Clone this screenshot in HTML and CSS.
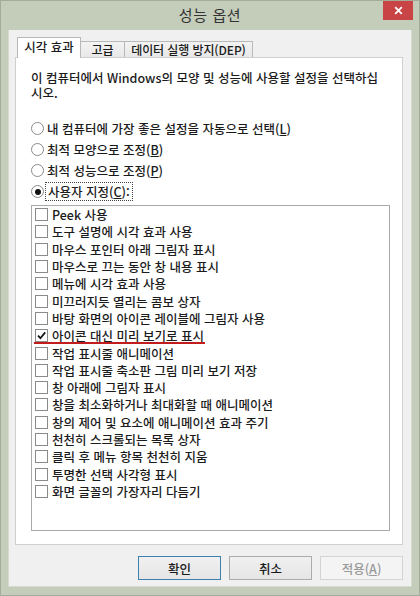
FILE: index.html
```html
<!DOCTYPE html>
<html lang="ko">
<head>
<meta charset="utf-8">
<title>성능 옵션</title>
<link rel="stylesheet" href="styles.css">
</head>
<body>
<div class="window">
  <div class="titlebar">
    <span class="spacer"></span>
    <span class="title">성능 옵션</span>
    <button class="close" aria-label="닫기">
      <svg width="9" height="9" viewBox="0 0 9 9"><path d="M1.2 1.2L7.8 7.8M7.8 1.2L1.2 7.8" stroke="#fff" stroke-width="1.8" fill="none"/></svg>
    </button>
  </div>
  <div class="client">
    <div class="tabs">
      <div class="tab active">시각 효과</div>
      <div class="tab t2">고급</div>
      <div class="tab t3">데이터 실행 방지(DEP)</div>
    </div>
    <div class="panel">
      <p class="desc">이 컴퓨터에서 Windows의 모양 및 성능에 사용할 설정을 선택하십<br>시오.</p>
      <div class="radios">
        <div class="radio"><span class="rb"></span><span class="rl">내 컴퓨터에 가장 좋은 설정을 자동으로 선택(<u>L</u>)</span></div>
        <div class="radio"><span class="rb"></span><span class="rl">최적 모양으로 조정(<u>B</u>)</span></div>
        <div class="radio"><span class="rb"></span><span class="rl">최적 성능으로 조정(<u>P</u>)</span></div>
        <div class="radio"><span class="rb on"></span><span class="rl focus">사용자 지정(<u>C</u>):</span></div>
      </div>
      <div class="listbox">
        <div class="item"><span class="cb"></span>Peek 사용</div>
        <div class="item"><span class="cb"></span>도구 설명에 시각 효과 사용</div>
        <div class="item"><span class="cb"></span>마우스 포인터 아래 그림자 표시</div>
        <div class="item"><span class="cb"></span>마우스로 끄는 동안 창 내용 표시</div>
        <div class="item"><span class="cb"></span>메뉴에 시각 효과 사용</div>
        <div class="item"><span class="cb"></span>미끄러지듯 열리는 콤보 상자</div>
        <div class="item"><span class="cb"></span>바탕 화면의 아이콘 레이블에 그림자 사용</div>
        <div class="item marked"><span class="cb"><svg width="11" height="11" viewBox="0 0 11 11"><path d="M2 5.6L4.4 8.2L9.2 2.4" stroke="#111" stroke-width="1.7" fill="none"/></svg></span>아이콘 대신 미리 보기로 표시</div>
        <div class="item"><span class="cb"></span>작업 표시줄 애니메이션</div>
        <div class="item"><span class="cb"></span>작업 표시줄 축소판 그림 미리 보기 저장</div>
        <div class="item"><span class="cb"></span>창 아래에 그림자 표시</div>
        <div class="item"><span class="cb"></span>창을 최소화하거나 최대화할 때 애니메이션</div>
        <div class="item"><span class="cb"></span>창의 제어 및 요소에 애니메이션 효과 주기</div>
        <div class="item"><span class="cb"></span>천천히 스크롤되는 목록 상자</div>
        <div class="item"><span class="cb"></span>클릭 후 메뉴 항목 천천히 지움</div>
        <div class="item"><span class="cb"></span>투명한 선택 사각형 표시</div>
        <div class="item"><span class="cb"></span>화면 글꼴의 가장자리 다듬기</div>
      </div>
    </div>
    <div class="buttons">
      <button class="btn default">확인</button>
      <button class="btn">취소</button>
      <button class="btn disabled">적용(<u>A</u>)</button>
    </div>
  </div>
</div>
</body>
</html>
```

FILE: styles.css
```css
* { box-sizing: border-box; }
html, body { margin: 0; padding: 0; background: #c4ccba; }
body {
  font-family: "Noto Sans CJK KR", "Malgun Gothic", sans-serif;
  font-size: 12.5px;
  font-weight: 500;
  color: #1b1b1b;
}
.window {
  width: 420px;
  height: 596px;
  background: #c4ccba;
  border: 1px solid #a3ab99;
  display: flex;
  flex-direction: column;
}
.titlebar {
  height: 29px;
  display: grid;
  grid-template-columns: 1fr auto 1fr;
  align-items: start;
}
.title {
  font-size: 15px;
  font-weight: 400;
  line-height: 28px;
  color: #333;
  letter-spacing: 0.6px;
}
.close {
  justify-self: end;
  width: 30px;
  height: 19px;
  margin: 0 6px 0 0;
  padding: 0;
  border: none;
  background: #c94545;
  display: flex;
  align-items: center;
  justify-content: center;
}
.client {
  flex: 1;
  margin: 0 7px 8px 7px;
  background: #f0f0f0;
  border: 1px solid #d6dbd0;
  border-top: none;
  padding: 7px 8px 6px 6px;
  display: flex;
  flex-direction: column;
}
.tabs {
  height: 20px;
  display: flex;
  align-items: flex-end;
  padding-left: 2px;
}
.tab {
  height: 16px;
  border: 1px solid #b9b9b9;
  border-bottom: none;
  background: linear-gradient(#f3f3f3, #e8e8e8);
  display: flex;
  align-items: center;
  justify-content: center;
  line-height: 14px;
  white-space: nowrap;
  font-size: 12px;
}
.tab.active {
  height: 21px;
  width: 64px;
  margin-bottom: -1px;
  background: #fff;
  position: relative;
  z-index: 1;
  padding-bottom: 2px;
  font-size: 12.5px;
}
.tab.t2 { width: 45px; margin-left: -1px; }
.tab.t3 { width: 129px; margin-left: -1px; letter-spacing: -0.1px; }
.panel {
  flex: 1;
  background: #fff;
  border: 1px solid #cfcfcf;
  padding: 12px 12px 13px 15px;
  display: flex;
  flex-direction: column;
}
.desc {
  margin: 0;
  line-height: 15px;
}
.radios { margin-top: 18px; }
.radio {
  height: 21px;
  display: flex;
  align-items: center;
}
.rb {
  width: 13px;
  height: 13px;
  border: 1px solid #8a8a8a;
  border-radius: 50%;
  background: #fff;
  margin-right: 3px;
  display: flex;
  align-items: center;
  justify-content: center;
  flex: none;
}
.rb.on::after {
  content: "";
  width: 6px;
  height: 6px;
  border-radius: 50%;
  background: #111;
}
.rl { line-height: 15px; }
.rl.focus {
  outline: 1px dotted #444;
  outline-offset: 1px;
  padding: 0 1px;
}
.listbox {
  flex: 1;
  margin-top: 3px;
  border: 1px solid #a9a9a9;
  background: #fff;
  padding: 0 0 0 3px;
}
.item {
  height: 17.3px;
  display: flex;
  align-items: center;
  white-space: nowrap;
}
.cb {
  width: 13px;
  height: 13px;
  border: 1px solid #8a8a8a;
  background: #fff;
  margin-right: 4px;
  flex: none;
  display: flex;
  align-items: center;
  justify-content: center;
}
.item.marked { position: relative; }
.item.marked::after {
  content: "";
  position: absolute;
  left: -1px;
  top: 15px;
  width: 171px;
  height: 2px;
  background: #c21c1c;
}
.buttons {
  margin-top: 11px;
  height: 24px;
  display: flex;
  justify-content: flex-end;
  gap: 8px;
}
.btn {
  width: 83px;
  height: 24px;
  font-family: inherit;
  font-size: 12.5px;
  font-weight: 500;
  color: #1b1b1b;
  border: 1px solid #acacac;
  background: linear-gradient(#f0f0f0, #e5e5e5);
  padding: 0;
}
.btn.default { border-color: #3c7fb1; }
.btn.disabled {
  color: #9a9a9a;
  border-color: #d3d3d3;
  background: #f4f4f4;
}
```
